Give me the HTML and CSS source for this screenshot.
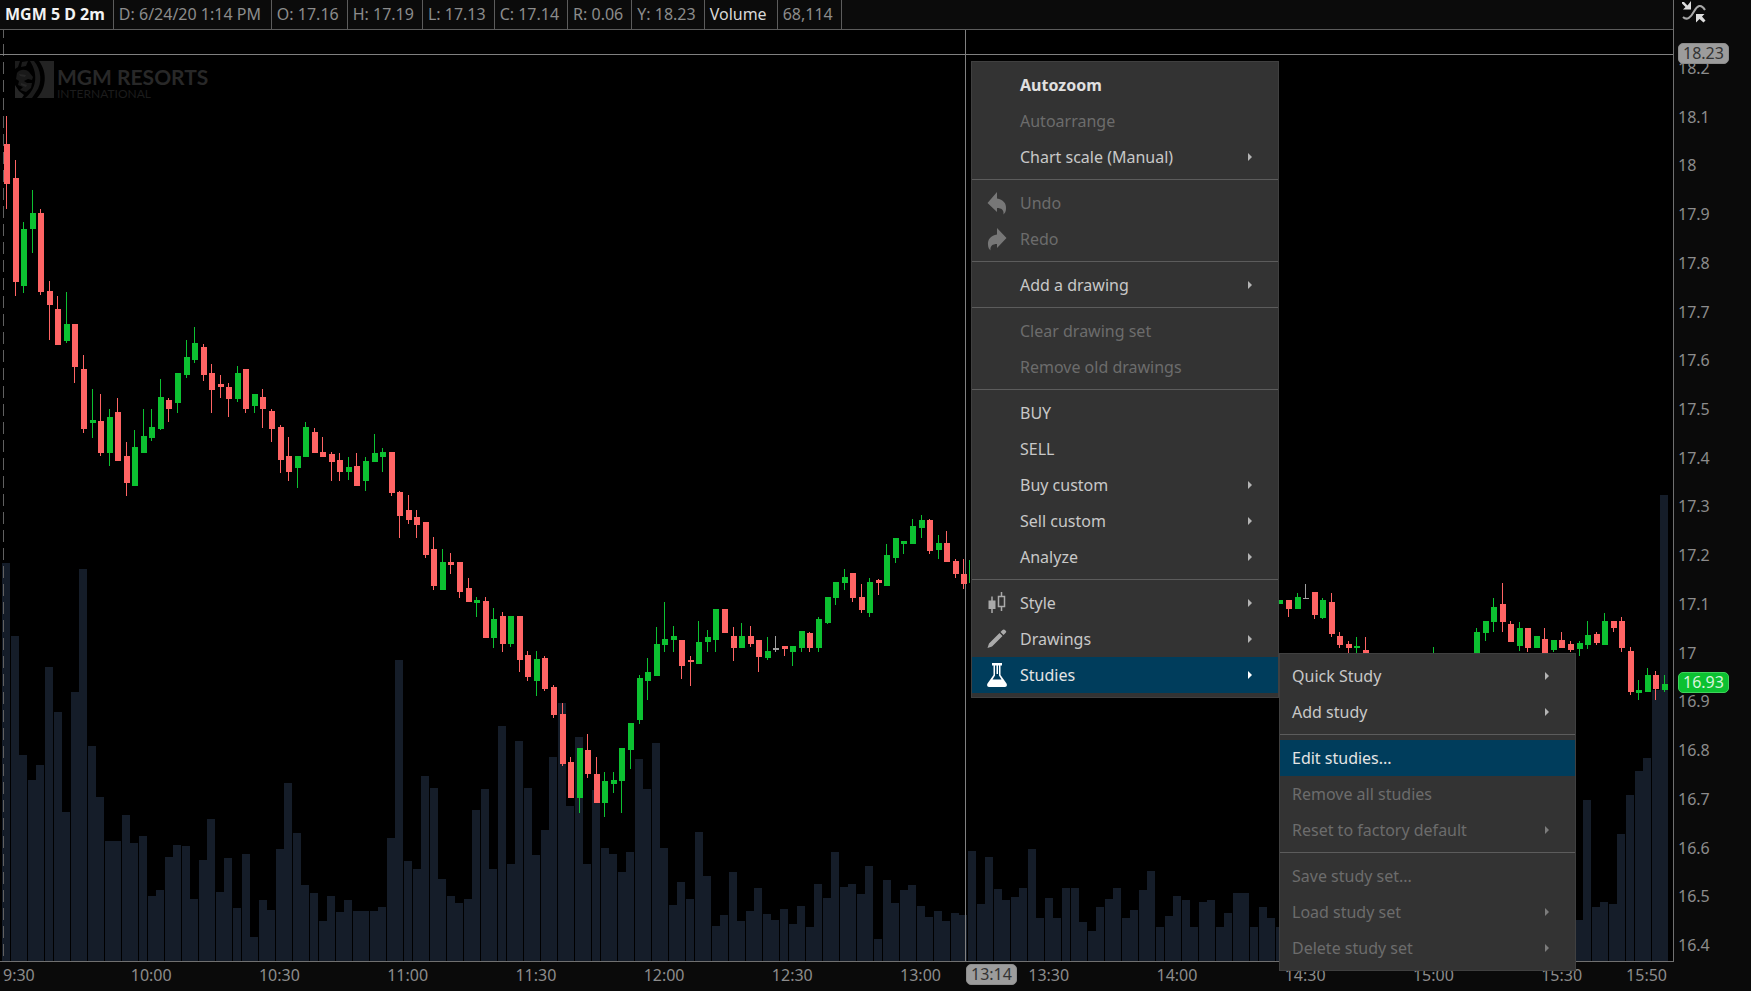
FILE: index.html
```html
<!DOCTYPE html>
<html lang="en">
<head>
<meta charset="utf-8">
<title>MGM 5 D 2m</title>
<link rel="stylesheet" href="styles.css">
</head>
<body>
<div class="app">
  <main class="pane">
    <header class="infobar">
      <span class="cell symbol">MGM 5 D 2m</span>
      <span class="cell date">D: 6/24/20 1:14 PM</span>
      <span class="cell">O: 17.16</span>
      <span class="cell">H: 17.19</span>
      <span class="cell">L: 17.13</span>
      <span class="cell">C: 17.14</span>
      <span class="cell">R: 0.06</span>
      <span class="cell">Y: 18.23</span>
      <span class="cell study">Volume</span>
      <span class="cell">68,114</span>
    </header>
    <section class="plot">
      <svg class="chart" id="chart" viewBox="0 30 1673 931" preserveAspectRatio="none" role="img" aria-label="MGM price and volume"></svg>
      <div class="logo">
        <svg width="39" height="37" viewBox="0 0 39 37" aria-hidden="true">
          <path fill="#232323" d="M24 0H39V37H22C31 28 33 12 24 0Z"/>
          <path fill="#1c1c1c" d="M0 0H5L3 6L0 8ZM7 1L13 0L11 5L6 6ZM15 0H19C26 8 28 22 21 31L17 37H10C21 29 24 14 15 0Z"/>
          <path fill="#191919" d="M2 12C5 8 11 8 14 11L18 16L17 19L13 18L9 20L12 22L17 22L16 27L11 31L5 29L8 26L3 24L4 20L1 18Z"/>
          <path fill="#262626" d="M4 13L11 14L10 16L5 15ZM6 22L12 24L11 26L6 24ZM0 24L4 30L9 34L7 37H0Z"/>
        </svg>
        <div class="logo-text"><span class="logo-name">MGM RESORTS</span><span class="logo-sub">INTERNATIONAL</span></div>
      </div>
    </section>
  </main>

  <aside class="price-axis">
    <button class="scale-btn" aria-label="Fit scale">
      <svg width="24" height="24" viewBox="0 0 24 24" aria-hidden="true">
        <path fill="none" stroke="#a8a8a8" stroke-width="2" d="M1 17C5 21 9 17 12 11.500S19 3 23 10"/>
        <path fill="#ddd" d="M9 1V9.500H1L3.500 7L0 3.500V2H2L5.500 5.500Z"/>
        <path fill="#ddd" d="M14 14H22.500L20 16.500L23.500 20.500L21.500 22.500L17.500 19L14 22.500Z"/>
      </svg>
    </button>
    <div class="prices">
      <span>18.2</span><span>18.1</span><span>18</span><span>17.9</span><span>17.8</span><span>17.7</span><span>17.6</span><span>17.5</span><span>17.4</span><span>17.3</span><span>17.2</span><span>17.1</span><span>17</span><span>16.9</span><span>16.8</span><span>16.7</span><span>16.6</span><span>16.5</span><span>16.4</span>
    </div>
    <span class="tag tag-cursor">18.23</span>
    <span class="tag tag-last">16.93</span>
  </aside>

  <footer class="time-axis">
    <span>9:30</span>
    <div class="times">
      <span>10:00</span><span>10:30</span><span>11:00</span><span>11:30</span><span>12:00</span><span>12:30</span><span>13:00</span><span>13:30</span><span>14:00</span><span>14:30</span><span>15:00</span><span>15:30</span>
    </div>
    <span>15:50</span>
    <span class="tag tag-time">13:14</span>
  </footer>

  <div class="menu menu-main" role="menu">
    <button class="item strong" role="menuitem">Autozoom</button>
    <button class="item" role="menuitem" disabled>Autoarrange</button>
    <button class="item sub" role="menuitem">Chart scale (Manual)</button>
    <hr>
    <button class="item" role="menuitem" disabled>
      <svg class="icon" width="20" height="24" viewBox="0 0 20 24" aria-hidden="true"><path fill="#777" d="M10 1V7.500C16 8.500 19.500 12 19 18C18.800 20.500 18 22 16.500 23.500C17 19 14.500 17 10 17V21L.5 12Z"/></svg>Undo</button>
    <button class="item" role="menuitem" disabled>
      <svg class="icon" width="20" height="24" viewBox="0 0 20 24" aria-hidden="true"><path fill="#777" d="M10 1V7.500C4 8.500 .5 12 1 18C1.200 20.500 2 22 3.500 23.500C3 19 5.500 17 10 17V21L19.500 11Z"/></svg>Redo</button>
    <hr>
    <button class="item sub" role="menuitem">Add a drawing</button>
    <hr>
    <button class="item" role="menuitem" disabled>Clear drawing set</button>
    <button class="item" role="menuitem" disabled>Remove old drawings</button>
    <hr>
    <button class="item" role="menuitem">BUY</button>
    <button class="item" role="menuitem">SELL</button>
    <button class="item sub" role="menuitem">Buy custom</button>
    <button class="item sub" role="menuitem">Sell custom</button>
    <button class="item sub" role="menuitem">Analyze</button>
    <hr>
    <button class="item sub" role="menuitem">
      <svg class="icon" width="20" height="24" viewBox="0 0 20 24" aria-hidden="true"><path fill="#aaa" d="M1.500 9.500H8.500V18H1.500Z"/><path fill="none" stroke="#aaa" stroke-width="1.500" d="M5 5.500V22M14.500 1V5.500M14.500 16V20M11.500 5.500H17.500V15.500H11.500Z"/></svg>Style</button>
    <button class="item sub" role="menuitem">
      <svg class="icon" width="20" height="24" viewBox="0 0 20 24" aria-hidden="true"><path fill="#aaa" d="M.5 21L2 16.500L12.500 6L15.500 9L5 19.500ZM13.500 5L15.500 3C16.500 2 17.500 2.500 18.500 3.500S19.500 5 18.500 6L16.500 8Z"/></svg>Drawings</button>
    <button class="item sub active" role="menuitem">
      <svg class="icon" width="20" height="24" viewBox="0 0 20 24" aria-hidden="true"><path fill="#fff" fill-rule="evenodd" d="M5 0H15V2.500H13.500V12L19.500 20.500C20.500 22.500 19.500 24 18 24H2C.5 24-.5 22.500.5 20.500L6.500 12V2.500H5ZM8 2.500V12.500L5.500 16.500H14.500L12 12.500V2.500H11V11H9.500V2.500Z"/></svg>Studies</button>
  </div>

  <div class="menu menu-studies" role="menu">
    <button class="item sub" role="menuitem">Quick Study</button>
    <button class="item sub" role="menuitem">Add study</button>
    <hr>
    <button class="item active" role="menuitem">Edit studies...</button>
    <button class="item" role="menuitem" disabled>Remove all studies</button>
    <button class="item sub" role="menuitem" disabled>Reset to factory default</button>
    <hr>
    <button class="item" role="menuitem" disabled>Save study set...</button>
    <button class="item sub" role="menuitem" disabled>Load study set</button>
    <button class="item sub" role="menuitem" disabled>Delete study set</button>
  </div>
</div>
<script src="chart.js"></script>
</body>
</html>
```
FILE: styles.css
```css
* { box-sizing: border-box; }
body {
  margin: 0;
  background: #0a0a0a;
  color: #8c8c8c;
  font: 16px/24px "Noto Sans", "Open Sans", sans-serif;
}
button { font: inherit; color: inherit; border: 0; padding: 0; background: none; }

.app {
  position: relative;
  display: grid;
  grid-template-columns: 1fr 77px;
  grid-template-rows: 1fr 29px;
  height: 100vh;
  overflow: hidden;
}
.pane {
  display: flex;
  flex-direction: column;
  min-height: 0;
  border-right: 1px solid #707070;
  border-bottom: 1px solid #707070;
}
.infobar {
  display: flex;
  height: 30px;
  flex: none;
  background: #0b0b0b;
  border-bottom: 1px solid #5c5c5c;
}
.cell {
  padding: 2px 8px 0 5px;
  border-right: 1px solid #5c5c5c;
  white-space: nowrap;
}
.symbol { color: #f2f2f2; font-weight: 700; }
.date { min-width: 158px; }
.study { min-width: 73px; color: #d8d8d8; }

.plot { position: relative; flex: 1; min-height: 0; background: #000; }
.chart { display: block; width: 100%; height: 100%; }
.vol { fill: #151d29; }
.up { fill: #0cc131; }
.down { fill: #ff6464; }
.flat { fill: #a0a0a0; }
.cross { fill: #808080; }
.session { stroke: #606060; stroke-dasharray: 12 6; }

.logo {
  position: absolute;
  left: 15px;
  top: 31px;
  display: flex;
  gap: 3px;
}
.logo-text { display: flex; flex-direction: column; padding-top: 5px; color: #282828; }
.logo-name { font: 700 21px/22px Lato, sans-serif; }
.logo-sub { font: 12px/12px Lato, sans-serif; color: #1c1c1c; }

.price-axis { position: relative; padding-left: 4px; }
.scale-btn { display: block; height: 24px; margin-left: 4px; }
.prices {
  position: absolute;
  top: 56px;
  bottom: 5px;
  left: 4px;
  display: flex;
  flex-direction: column;
  justify-content: space-between;
}
.tag {
  position: absolute;
  padding: 0 4px;
  border: 1px solid #8c8c8c;
  border-radius: 5px;
  background: #9c9c9c;
  color: #333;
  line-height: 19px;
}
.tag-cursor { left: 4px; top: 43px; }
.tag-last { left: 4px; top: 672px; background: #0cc131; border-color: #3fd45c; color: #d8f5dc; }

.time-axis {
  position: relative;
  grid-column: 1 / 3;
  display: flex;
  padding: 1px 84px 0 3px;
}
.times {
  flex: 1;
  display: flex;
  justify-content: space-between;
  margin: 0 44px 0 96px;
}
.tag-time { left: 966px; top: 2px; }

.menu {
  position: absolute;
  display: flex;
  flex-direction: column;
  border: 1px solid #404040;
  background: #333;
  color: #c8c8c8;
}
.menu-main { left: 971px; top: 61px; width: 308px; padding: 5px 0 4px; }
.menu-studies { left: 1279px; top: 653px; width: 297px; padding: 4px 0; }
.menu hr {
  width: 100%;
  height: 1px;
  margin: 4px 0 5px;
  border: 0;
  background: #5c5c5c;
}
.item {
  position: relative;
  display: flex;
  align-items: center;
  height: 36px;
  padding: 0 26px 0 12px;
  text-align: left;
}
.menu-main .item { padding-left: 48px; }
.item:disabled { color: #6c6c6c; }
.strong { font-weight: 700; color: #e0e0e0; }
.active { background: #003d5c; color: #e4e4e4; }
.icon { position: absolute; left: 15px; top: 6px; }
.sub::after {
  content: "";
  margin-left: auto;
  border: solid transparent;
  border-width: 4px 0 4px 4px;
  border-left-color: #b4b4b4;
}
.sub:disabled::after { border-left-color: #7c7c7c; }
.active::after { border-left-color: #fff; }
```
FILE: chart.js
```js
// Volume bar tops, one per two-minute bar.
const volume = [
  563,636,755,780,765,667,712,812,692,569,746,797,841,841,815,843,836,896,890,857,
  845,846,899,860,819,892,858,908,854,937,900,910,849,783,833,885,893,921,896,912,
  900,911,911,911,907,838,660,861,869,776,788,879,896,903,899,810,789,869,726,864,
  741,788,855,830,757,703,806,737,864,790,848,854,872,852,759,789,743,848,905,882,
  899,832,876,926,915,872,921,911,888,914,920,909,924,906,927,884,898,852,887,884,
  894,866,939,880,903,890,885,906,917,911,921,913,915,851,904,857,889,900,897,888,
  849,918,898,918,888,888,922,931,907,899,888,918,910,890,871,927,916,896,900,927,
  902,900,927,913,893,893,927,907,918,927,930,930,930,930,930,930,930,930,930,930,
  930,930,930,930,930,930,930,930,930,930,930,930,930,930,930,930,930,930,930,930,
  930,930,930,930,920,800,907,902,904,834,795,771,758,690,495
];

// [bar index, colour, high, body top, body bottom, low]
const candles = [
  [0,"r",116,144,184,209],[1,"r",160,178,282,296],[2,"g",222,229,286,293],[3,"g",190,213,229,253],
  [4,"r",209,213,292,295],[5,"r",281,291,305,340],[6,"r",296,309,345,345],[7,"g",292,324,341,343],
  [8,"r",324,324,367,383],[9,"r",355,369,429,433],[10,"g",389,420,423,438],[11,"r",394,421,453,456],
  [12,"g",409,417,453,466],[13,"r",398,412,461,461],[14,"r",442,456,483,496],[15,"g",430,447,486,486],
  [16,"g",409,436,453,453],[17,"g",409,427,438,441],[18,"g",379,397,429,430],[19,"r",398,400,409,422],
  [20,"g",373,373,403,413],[21,"g",340,357,375,378],[22,"g",327,343,360,363],[23,"r",344,347,375,381],
  [24,"r",364,373,390,413],[25,"r",375,384,387,398],[26,"r",383,387,399,417],[27,"g",366,373,399,402],
  [28,"r",369,369,409,413],[29,"g",394,394,406,413],[30,"r",389,397,409,428],[31,"r",409,411,429,442],
  [32,"r",425,427,460,473],[33,"r",437,456,472,481],[34,"g",456,456,468,488],[35,"g",422,427,457,457],
  [36,"r",428,432,453,453],[37,"r",437,452,457,457],[38,"r",452,454,462,481],[39,"r",453,460,472,481],
  [40,"g",457,467,472,480],[41,"r",453,466,486,486],[42,"g",457,461,481,491],[43,"g",434,453,462,462],
  [44,"g",448,452,457,472],[45,"r",452,452,493,496],[46,"r",491,492,516,538],[47,"r",495,510,520,524],
  [48,"r",510,517,525,538],[49,"r",522,522,555,558],[50,"r",537,549,586,590],[51,"g",549,562,590,590],
  [52,"r",553,562,565,574],[53,"r",562,562,592,598],[54,"r",578,588,602,602],[55,"g",597,600,603,617],
  [56,"r",597,601,638,638],[57,"g",608,619,638,648],[58,"r",612,616,644,652],[59,"g",616,616,644,647],
  [60,"r",616,616,660,672],[61,"r",651,655,677,681],[62,"g",651,659,681,696],[63,"r",656,658,689,691],
  [64,"r",685,687,715,718],[65,"r",703,714,764,766],[66,"r",757,762,798,798],[67,"g",748,748,798,813],
  [68,"r",734,750,774,778],[69,"r",757,774,803,803],[70,"g",772,781,803,817],[71,"g",772,780,784,793],
  [72,"g",748,748,781,813],[73,"g",723,723,750,769],[74,"g",675,678,720,724],[75,"g",658,672,681,700],
  [76,"g",627,644,676,676],[77,"g",602,639,645,652],[78,"g",626,636,640,652],[79,"r",640,640,666,679],
  [80,"r",656,660,662,686],[81,"g",621,642,664,664],[82,"g",630,637,642,652],[83,"g",609,609,640,652],
  [84,"r",609,609,633,633],[85,"r",627,636,648,661],[86,"g",623,636,648,648],[87,"r",626,636,644,647],
  [88,"r",640,640,657,672],[89,"g",637,651,658,660],[90,"w",636,648,650,652],[91,"r",646,646,649,656],
  [92,"g",646,646,652,666],[93,"g",631,631,648,652],[94,"r",632,633,648,652],[95,"g",617,619,648,652],
  [96,"g",597,597,623,624],[97,"g",582,582,598,605],[98,"g",569,577,583,590],[99,"r",573,573,598,602],
  [100,"r",584,597,610,613],[101,"g",578,582,613,617],[102,"r",579,580,583,595],[103,"g",544,555,586,586],
  [104,"g",538,538,558,563],[105,"g",541,541,544,554],[106,"g",519,526,544,544],[107,"g",515,520,528,538],
  [108,"r",519,520,551,554],[109,"g",535,543,550,559],[110,"r",531,543,562,562],[111,"r",559,561,574,578],
  [112,"r",559,574,584,589],[113,"g",560,560,583,583],
  [149,"g",600,600,604,604],[150,"r",600,600,609,617],[151,"g",593,597,609,609],[152,"w",584,598,599,599],
  [153,"r",592,592,615,619],[154,"g",598,600,618,619],[155,"r",593,602,634,637],[156,"r",632,636,645,648],
  [157,"r",641,644,648,653],[158,"g",637,646,648,653],[159,"r",637,650,653,653],[167,"g",647,653,660,660],
  [172,"g",628,632,660,660],[173,"g",621,621,633,641],[174,"g",598,607,622,632],[175,"r",583,604,622,632],
  [176,"r",621,624,642,642],[177,"g",622,628,646,651],[178,"r",628,628,648,652],[179,"g",636,636,648,648],
  [180,"r",628,639,653,653],[181,"g",640,640,650,652],[182,"r",632,640,648,648],[183,"r",641,644,650,652],
  [184,"g",641,643,649,656],[185,"g",621,635,645,649],[186,"r",632,634,643,645],[187,"g",613,621,645,645],
  [188,"r",621,621,628,632],[189,"r",617,621,648,652],[190,"r",647,651,692,695],[191,"g",680,690,693,700],
  [192,"g",668,675,692,692],[193,"r",671,675,689,700],[194,"g",675,684,690,692]
];

const pitch = 8.546;
const base = 961;
const names = { g: "up", r: "down", w: "flat" };
const rect = (cls, x, y, w, h) =>
  `<rect class="${cls}" x="${x}" y="${y}" width="${w}" height="${h}"/>`;

let out = "";
volume.forEach((top, i) => {
  out += rect("vol", Math.floor(2.8 + pitch * i), top, 8, base - top);
});
out += '<line class="session" x1="3.5" x2="3.5" y1="26" y2="961"/>';
out += rect("cross", 0, 54, 1673, 1) + rect("cross", 965, 30, 1, 931);
candles.forEach(([i, c, high, top, bottom, low]) => {
  const x = Math.floor(4.6 + pitch * i);
  if (i !== 113) out += rect(names[c], x, top, 6, bottom - top);
  out += rect(names[c], i === 113 ? 969 : x + 2, high, 1, low - high);
});
document.getElementById("chart").innerHTML = out;
```
